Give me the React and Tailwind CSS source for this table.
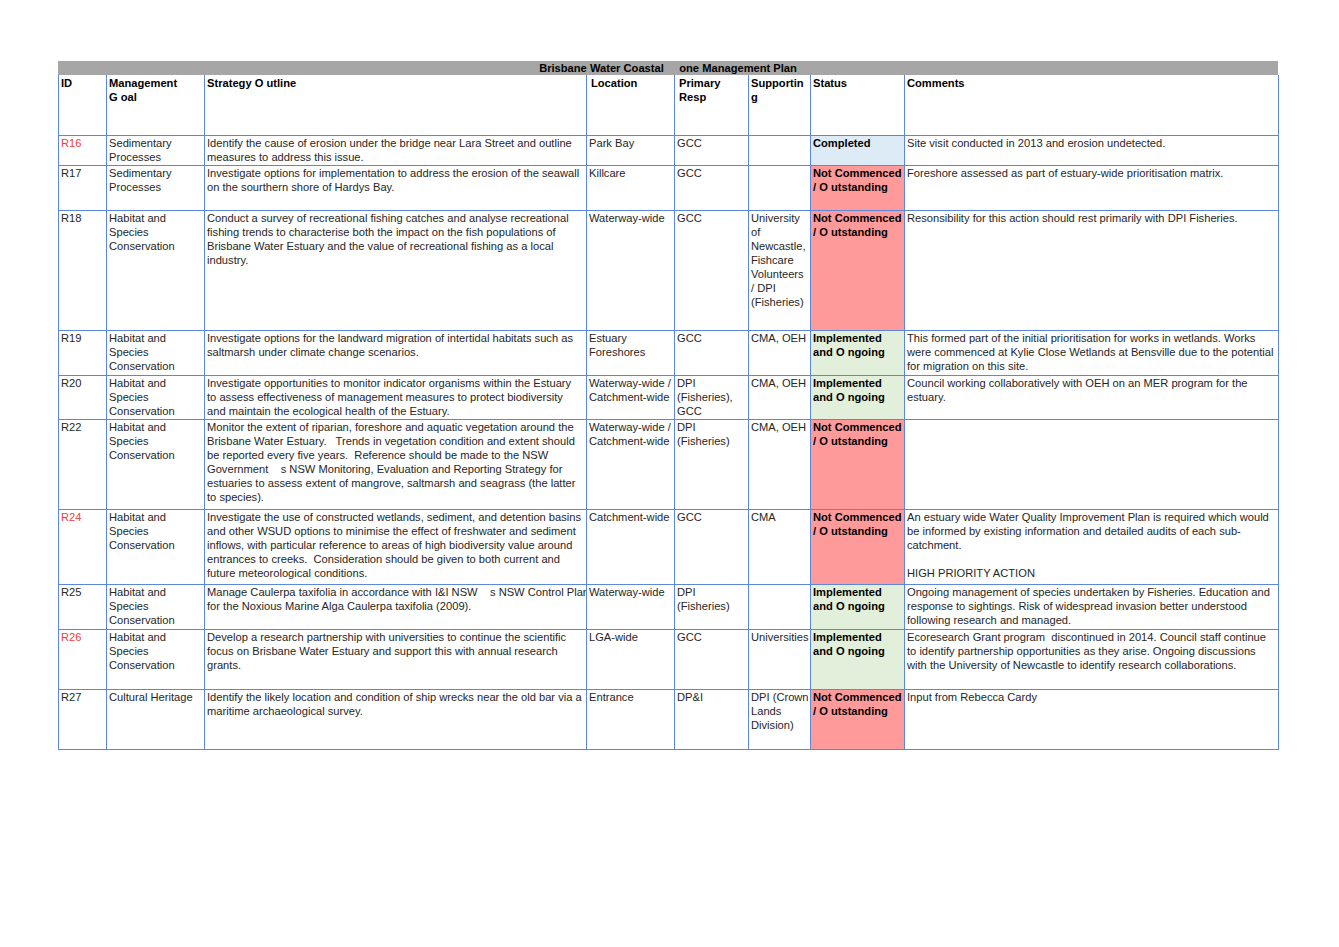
import React from 'react';

const HSC = ['Habitat and', 'Species', 'Conservation'];

const STATUS = {
  done: { bg: 'bg-[#ddebf7]', lines: ['Completed'] },
  nc: { bg: 'bg-[#ff9a9a]', lines: ['Not Commenced', '/ O utstanding'] },
  imp: { bg: 'bg-[#e2efda]', lines: ['Implemented', 'and O ngoing'] },
};

const rows = [
  {
    id: 'R16', red: true, h: 'h-[30px]',
    goal: ['Sedimentary', 'Processes'],
    strategy: ['Identify the cause of erosion under the bridge near Lara Street and outline', 'measures to address this issue.'],
    loc: ['Park Bay'], primary: ['GCC'], support: [], status: 'done',
    comments: ['Site visit conducted in 2013 and erosion undetected.'],
  },
  {
    id: 'R17', h: 'h-[45px]',
    goal: ['Sedimentary', 'Processes'],
    strategy: ['Investigate options for implementation to address the erosion of the seawall', 'on the sourthern shore of Hardys Bay.'],
    loc: ['Killcare'], primary: ['GCC'], support: [], status: 'nc',
    comments: ['Foreshore assessed as part of estuary-wide prioritisation matrix.'],
  },
  {
    id: 'R18', h: 'h-[120px]',
    goal: HSC,
    strategy: [
      'Conduct a survey of recreational fishing catches and analyse recreational',
      'fishing trends to characterise both the impact on the fish populations of',
      'Brisbane Water Estuary and the value of recreational fishing as a local',
      'industry.',
    ],
    loc: ['Waterway-wide'], primary: ['GCC'],
    support: ['University', 'of', 'Newcastle,', 'Fishcare', 'Volunteers', '/ DPI', '(Fisheries)'],
    status: 'nc',
    comments: ['Resonsibility for this action should rest primarily with DPI Fisheries.'],
  },
  {
    id: 'R19', h: 'h-[45px]',
    goal: HSC,
    strategy: ['Investigate options for the landward migration of intertidal habitats such as', 'saltmarsh under climate change scenarios.'],
    loc: ['Estuary', 'Foreshores'], primary: ['GCC'], support: ['CMA, OEH'], status: 'imp',
    comments: [
      'This formed part of the initial prioritisation for works in wetlands. Works',
      'were commenced at Kylie Close Wetlands at Bensville due to the potential',
      'for migration on this site.',
    ],
  },
  {
    id: 'R20', h: 'h-[44px]',
    goal: HSC,
    strategy: [
      'Investigate opportunities to monitor indicator organisms within the Estuary',
      'to assess effectiveness of management measures to protect biodiversity',
      'and maintain the ecological health of the Estuary.',
    ],
    loc: ['Waterway-wide /', 'Catchment-wide'], primary: ['DPI', '(Fisheries),', 'GCC'],
    support: ['CMA, OEH'], status: 'imp',
    comments: ['Council working collaboratively with OEH on an MER program for the', 'estuary.'],
  },
  {
    id: 'R22', h: 'h-[90px]',
    goal: HSC,
    strategy: [
      'Monitor the extent of riparian, foreshore and aquatic vegetation around the',
      'Brisbane Water Estuary.   Trends in vegetation condition and extent should',
      'be reported every five years.  Reference should be made to the NSW',
      'Government    s NSW Monitoring, Evaluation and Reporting Strategy for',
      'estuaries to assess extent of mangrove, saltmarsh and seagrass (the latter',
      'to species).',
    ],
    loc: ['Waterway-wide /', 'Catchment-wide'], primary: ['DPI', '(Fisheries)'],
    support: ['CMA, OEH'], status: 'nc', comments: [],
  },
  {
    id: 'R24', red: true, h: 'h-[75px]',
    goal: HSC,
    strategy: [
      'Investigate the use of constructed wetlands, sediment, and detention basins',
      'and other WSUD options to minimise the effect of freshwater and sediment',
      'inflows, with particular reference to areas of high biodiversity value around',
      'entrances to creeks.  Consideration should be given to both current and',
      'future meteorological conditions.',
    ],
    loc: ['Catchment-wide'], primary: ['GCC'], support: ['CMA'], status: 'nc',
    comments: [
      'An estuary wide Water Quality Improvement Plan is required which would',
      'be informed by existing information and detailed audits of each sub-',
      'catchment.',
      '',
      'HIGH PRIORITY ACTION',
    ],
  },
  {
    id: 'R25', h: 'h-[45px]',
    goal: HSC,
    strategy: ['Manage Caulerpa taxifolia in accordance with I&I NSW    s NSW Control Plan', 'for the Noxious Marine Alga Caulerpa taxifolia (2009).'],
    loc: ['Waterway-wide'], primary: ['DPI', '(Fisheries)'], support: [], status: 'imp',
    comments: [
      'Ongoing management of species undertaken by Fisheries. Education and',
      'response to sightings. Risk of widespread invasion better understood',
      'following research and managed.',
    ],
  },
  {
    id: 'R26', red: true, h: 'h-[60px]',
    goal: HSC,
    strategy: [
      'Develop a research partnership with universities to continue the scientific',
      'focus on Brisbane Water Estuary and support this with annual research',
      'grants.',
    ],
    loc: ['LGA-wide'], primary: ['GCC'], support: ['Universities'], status: 'imp',
    comments: [
      'Ecoresearch Grant program  discontinued in 2014. Council staff continue',
      'to identify partnership opportunities as they arise. Ongoing discussions',
      'with the University of Newcastle to identify research collaborations.',
    ],
  },
  {
    id: 'R27', h: 'h-[60px]',
    goal: ['Cultural Heritage'],
    strategy: ['Identify the likely location and condition of ship wrecks near the old bar via a', 'maritime archaeological survey.'],
    loc: ['Entrance'], primary: ['DP&I'], support: ['DPI (Crown', 'Lands', 'Division)'], status: 'nc',
    comments: ['Input from Rebecca Cardy'],
  },
];

const Lines = ({ lines }) =>
  lines.map((l, i) => (
    <div key={i} className="whitespace-pre h-[14px]">
      {l}
    </div>
  ));

const Cell = ({ children, className = '' }) => (
  <div className={`border-r border-b border-[#5d87d9] pl-[2px] overflow-hidden ${className}`}>
    {children}
  </div>
);

const cols = 'grid grid-cols-[48px_98px_382px_88px_74px_62px_94px_374px]';

const App = () => {
  return (
    <div className="bg-white w-[1339px] h-[947px] pt-[61px] pl-[58px] text-[11.15px] leading-[14px] text-[#262626] font-['Liberation_Sans',Arial,sans-serif]">
      <div className="w-[1220px]">
        {/* Title bar */}
        <div className="h-[14px] bg-[#a6a6a6] text-center font-bold text-black whitespace-pre">
          Brisbane Water Coastal     one Management Plan
        </div>

        {/* Header */}
        <div className={`${cols} h-[61px] border-l border-[#5d87d9] font-bold text-black`}>
          <Cell className="pt-px"><Lines lines={['ID']} /></Cell>
          <Cell className="pt-px"><Lines lines={['Management', 'G oal']} /></Cell>
          <Cell className="pt-px"><Lines lines={['Strategy O utline']} /></Cell>
          <Cell className="pt-px pl-[4px]"><Lines lines={['Location']} /></Cell>
          <Cell className="pt-px pl-[4px]"><Lines lines={['Primary', 'Resp']} /></Cell>
          <Cell className="pt-px"><Lines lines={['Supportin', 'g']} /></Cell>
          <Cell className="pt-px"><Lines lines={['Status']} /></Cell>
          <Cell className="pt-px"><Lines lines={['Comments']} /></Cell>
        </div>

        {/* Body */}
        {rows.map((r) => (
          <div key={r.id} className={`${cols} ${r.h} border-l border-[#5d87d9]`}>
            <Cell className={r.red ? 'text-[#f0403c]' : ''}><Lines lines={[r.id]} /></Cell>
            <Cell><Lines lines={r.goal} /></Cell>
            <Cell><Lines lines={r.strategy} /></Cell>
            <Cell><Lines lines={r.loc} /></Cell>
            <Cell><Lines lines={r.primary} /></Cell>
            <Cell><Lines lines={r.support} /></Cell>
            <Cell className={`${STATUS[r.status].bg} font-bold text-black`}>
              <Lines lines={STATUS[r.status].lines} />
            </Cell>
            <Cell><Lines lines={r.comments} /></Cell>
          </div>
        ))}
      </div>
    </div>
  );
};

export default App;
